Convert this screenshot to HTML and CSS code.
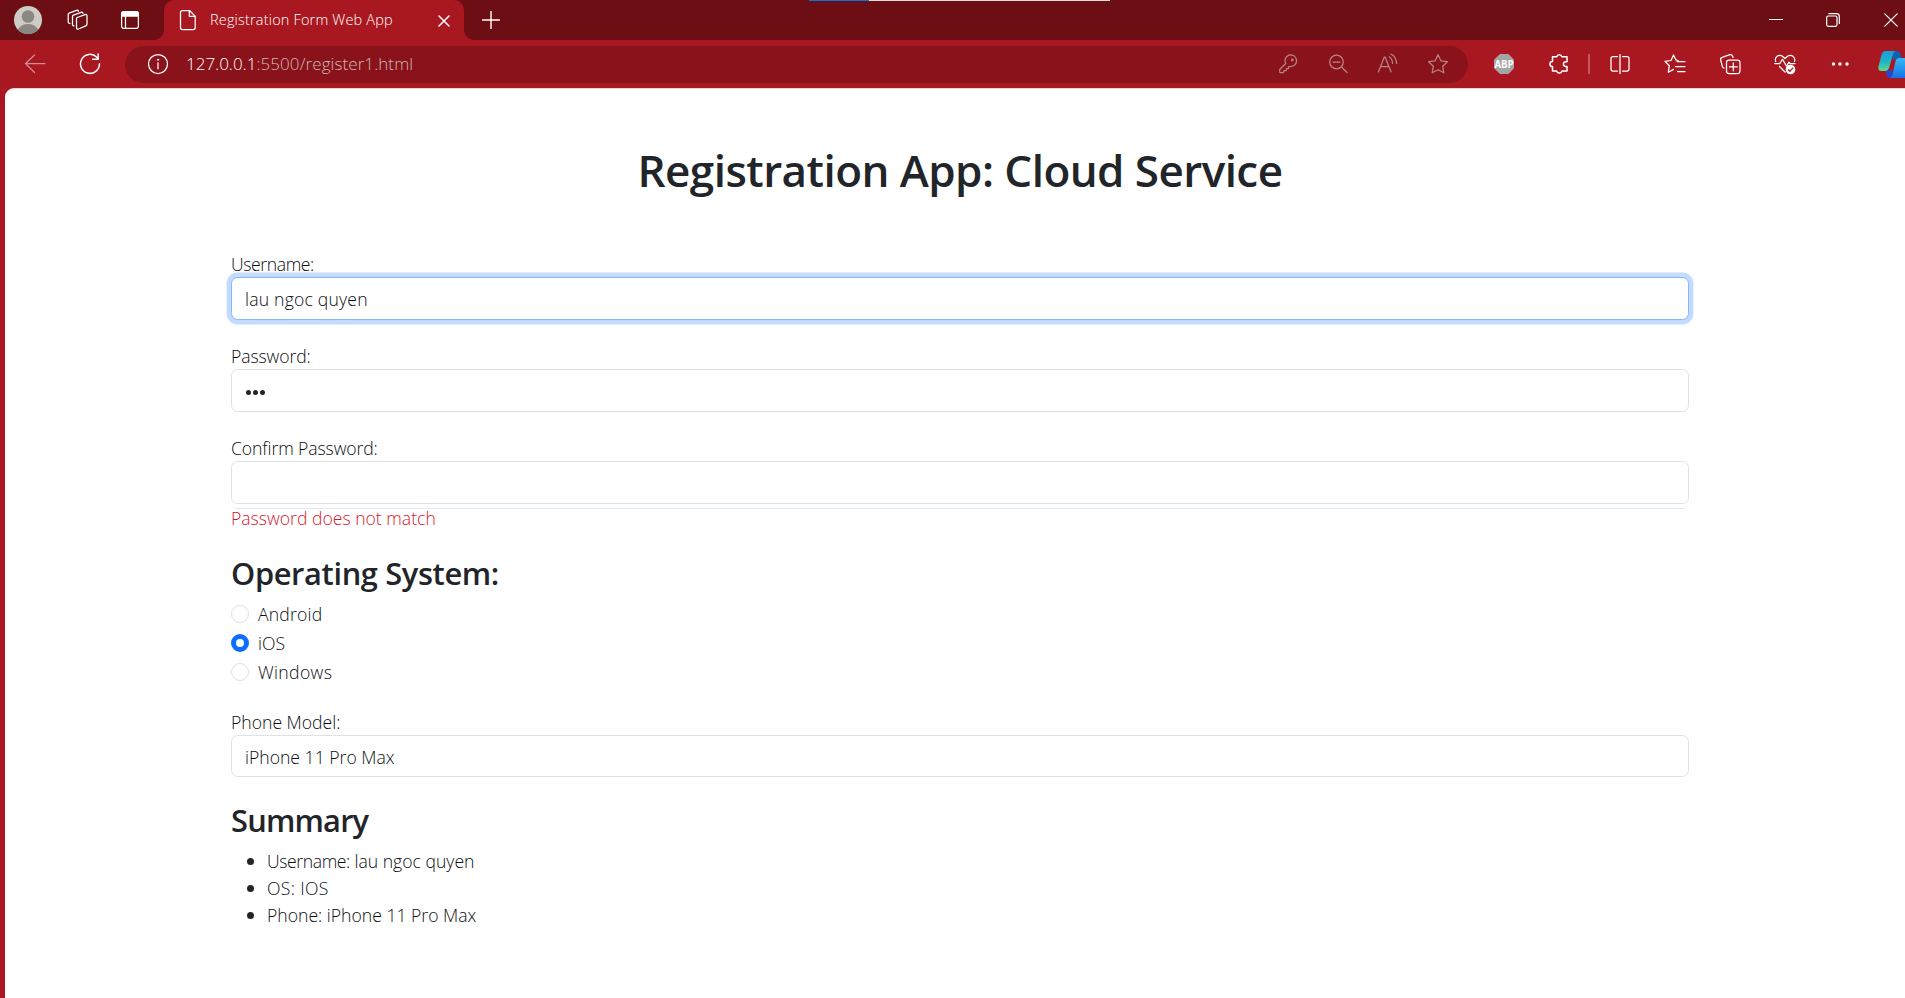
FILE: index.html
```html
<!DOCTYPE html>
<html lang="en">
<head>
<meta charset="utf-8">
<title>Registration Form Web App</title>
<link rel="stylesheet" href="styles.css">
</head>
<body>
<div class="loadbar"><span class="loadbar-done"></span></div>
<header class="strip">
  <svg class="avatar" viewBox="0 0 28 28"><defs><clipPath id="av"><circle cx="14" cy="14" r="14"/></clipPath></defs><circle cx="14" cy="14" r="14" fill="#cfccc8"/><g clip-path="url(#av)" fill="#8b8783"><circle cx="14" cy="10.5" r="6.3"/><ellipse cx="14" cy="26" rx="10.5" ry="8"/></g></svg>
  <svg class="ic workspaces" viewBox="0 0 24 24"><path d="M11.2 9.5 19 6.6q2-.6 2 1.3v8.2q0 1.300-1.200 1.800L12.500 21q-2 .7-2-1.300V10.500q0-.7.700-1z"/><path d="M8 17.800q-1.500.2-1.500-1.500V8.500q0-1 1-1.400L15 4.300q1.700-.5 2 1"/><path d="M4 15.300q-1.800.2-1.800-1.500V6.500q0-1 1-1.400L10.500 2.400q1.500-.5 2 .8"/></svg>
  <svg class="ic tabmenu" viewBox="0 0 24 24"><rect x="3.600" y="3.600" width="16.800" height="16.800" rx="2.500"/><path d="M3.600 8V6q0-2.400 2.400-2.400h12q2.400 0 2.400 2.400v2z" fill="#fff"/><path d="M7.500 8v12"/></svg>
  <div class="tab">
    <svg class="ic doc" viewBox="0 0 24 24"><path d="M6.500 2.500h7l5.700 5.700v11.300q0 2-2 2H6.500q-2 0-2-2v-15q0-2 2-2zM13.300 2.700v5.600h5.700"/></svg>
    <span class="tab-title">Registration Form Web App</span>
    <svg class="ic tab-x" viewBox="0 0 12 12"><path d="M1 1l10 10M11 1 1 11"/></svg>
  </div>
  <svg class="ic plus" viewBox="0 0 18 18"><path d="M9 .500v17M.500 9h17"/></svg>
  <svg class="ic wmin" viewBox="0 0 14 14"><path d="M.5 6.500h13"/></svg>
  <svg class="ic wmax" viewBox="0 0 14 14"><rect x=".7" y="3" width="10.300" height="10.300" rx="1.500"/><path d="M3 .7h7.500q2.800 0 2.800 2.800V10.500"/></svg>
  <svg class="ic wclose" viewBox="0 0 14 14"><path d="M.800.800l12.400 12.400M13.200.800.800 13.200"/></svg>
</header>
<nav class="toolbar">
  <svg class="ic back" viewBox="0 0 22 22"><path d="M21 10.500H1.500M10.500 2 1.500 10.500 10.500 19.500"/></svg>
  <svg class="ic reload" viewBox="0 0 22 22"><path d="M20.500 10.800A9.500 9.500 0 1 1 17.800 4.200L19 5.700M19.200 1v5.200h-5.500"/></svg>
  <div class="address">
    <svg class="ic info" viewBox="0 0 22 22"><circle cx="11" cy="11" r="9.500"/><path d="M11 9.800v6"/><circle cx="11" cy="6.800" r=".7" fill="#fff" stroke-width=".6"/></svg>
    <span class="host">127.0.0.1</span><span class="path">:5500/register1.html</span>
    <div class="address-tools">
      <svg class="ic" viewBox="0 0 24 24"><path d="M9.700 11.500A5.800 5.800 0 1 1 14.500 14.500q-1.300-.3-2 .5v1.500h-2l-.4 2.200H8l-.5 2H4.500q-.8 0-.8-.8v-2.400z"/><circle cx="16.300" cy="8" r=".8"/></svg>
      <svg class="ic" viewBox="0 0 24 24"><circle cx="10.500" cy="10" r="6.800"/><path d="M15.500 15l5.500 5.500M7 10h7"/></svg>
      <svg class="ic" viewBox="0 0 24 24"><path d="M2.500 19.800 8.300 5h.8L15 19.800M4.700 14.500h8M13.300 4.800q3 1.800 3.200 6.500M14.800 2q5.500 2.500 5.800 9.500"/></svg>
      <svg class="ic" viewBox="0 0 24 24"><path d="M12 2.800l2.900 6 6.500.9-4.700 4.600 1.100 6.500L12 17.700l-5.800 3.100 1.100-6.500L2.600 9.700l6.500-.9z"/></svg>
    </div>
  </div>
  <div class="actions">
    <svg class="abp" viewBox="0 0 24 24"><path d="M8 2h8.500L22 7.800v8.500L16.500 22H8L2 16.300V7.800z" fill="#a5a5a5"/><text x="12" y="15.800" text-anchor="middle" textLength="19" lengthAdjust="spacingAndGlyphs" class="abp-text">ABP</text></svg>
    <svg class="ic puzzle" viewBox="0 0 24 24"><path d="M6.500 4.800h3.200a2.700 2.700 0 0 1 5.200 0H20v4.900h-1.200a2.300 2.300 0 0 0 0 4.800H20v4.600h-5.100a2.700 2.700 0 0 1-5.200 0H5.500v-4.500a2.600 2.600 0 0 1 0-5.200V4.800z"/></svg>
    <span class="divider"></span>
    <svg class="ic split" viewBox="0 0 24 24"><path d="M12 2.500v19M9.500 4.500H5q-2 0-2 2v10.500q0 2 2 2h4.500M14.500 4.500H19q2 0 2 2v10.500q0 2-2 2h-4.500"/></svg>
    <svg class="ic fav" viewBox="0 0 24 24"><path d="M15 8.500 12.800 7.800 10.500 2.900 8 8.500 2 9.300l4.300 4.400-1 6.600 5.200-2.900M14 9.500h8M12.500 14.500h9.500M14.500 19.500h7.500"/></svg>
    <svg class="ic coll" viewBox="0 0 24 24"><rect x="8.500" y="8" width="13.500" height="13.500" rx="2.500"/><path d="M15.300 10.800v8M11.300 14.800h8M6 16.200q-1.300-.3-1.600-1.500L2.700 8Q2.200 5.800 4.200 5.300L11.800 2.700q2-.5 2.700 1.300l.6 1.500"/></svg>
    <svg class="ic health" viewBox="0 0 24 24"><path d="M2.700 9.500Q1.600 6.500 3.700 4.600 6.500 2.300 9.500 4.200L12 6.500l2.500-2.300q3-1.900 5.800.4 2.100 1.900 1.200 4.900M1.800 11.500h5L9.500 7.200l4 7 2.500-4 1 1.300h5M6.500 14.500l5.500 5.500"/><circle cx="17.500" cy="17.500" r="4.800" fill="#fff" stroke="none"/><path d="M15.300 17.800l1.500 1.500 3-3.200" stroke="#a91820"/></svg>
    <svg class="dots" viewBox="0 0 24 24" fill="#fff"><circle cx="5.500" cy="12" r="1.700"/><circle cx="12" cy="12" r="1.700"/><circle cx="19" cy="12" r="1.700"/></svg>
    <svg class="copilot" viewBox="0 0 27 27"><defs><linearGradient id="c1" x1="0" y1="0" x2="0" y2="1"><stop offset="0" stop-color="#169fe0"/><stop offset=".55" stop-color="#20b5c4"/><stop offset="1" stop-color="#63d98c"/></linearGradient><linearGradient id="c2" x1="0" y1="0" x2="0" y2="1"><stop offset="0" stop-color="#35b8f5"/><stop offset="1" stop-color="#1573e8"/></linearGradient></defs><path d="M15 0h4q2.500 0 3.500 3l1.500 5h-5l-4 1z" fill="#0b61b5"/><path d="M8 20l7-1-1 5.500Q13 27 11 27 9.500 26.500 8.500 24z" fill="#2145d4"/><path d="M7.500 0H18q-2 0-3 3.500L11 17q-1 3-4 3H3.500Q-.5 20 .5 15L3.500 4Q4.500 0 7.500 0z" fill="url(#c1)"/><path d="M20.500 7H27V27H11q2.500 0 3.500-3.500L17.500 10Q18.500 7 20.500 7z" fill="url(#c2)"/></svg>
  </div>
</nav>
<main class="page">
  <h1>Registration App: Cloud Service</h1>
  <form class="form">
    <div class="field"><label class="tight">Username:</label><div class="control focused loose">lau ngoc quyen</div></div>
    <div class="field"><label class="snug">Password:</label><div class="control"><i class="dot"></i><i class="dot"></i><i class="dot"></i></div></div>
    <div class="field confirm"><label class="snug">Confirm Password:</label><div class="control"></div><p class="error">Password does not match</p></div>
    <h3 class="os-title">Operating System:</h3>
    <div class="options">
      <label class="option"><span class="radio"></span><span class="loose">Android</span></label>
      <label class="option"><span class="radio checked"></span><span>iOS</span></label>
      <label class="option"><span class="radio"></span><span class="looser">Windows</span></label>
    </div>
    <div class="field phone"><label>Phone Model:</label><div class="control select">iPhone 11 Pro Max</div></div>
  </form>
  <h3 class="summary-title">Summary</h3>
  <ul class="summary">
    <li><span><span class="tight">Username:</span> lau ngoc quyen</span></li>
    <li><span class="looser">OS: IOS</span></li>
    <li><span>Phone: iPhone 11 Pro Max</span></li>
  </ul>
</main>
</body>
</html>
```
FILE: styles.css
```css
* { box-sizing: border-box; }
body {
  margin: 0;
  height: 998px;
  overflow: hidden;
  background: #a91820;
  color: #0b0e11;
  font: 300 17.6px/26px "Open Sans", "Noto Sans", sans-serif;
}
svg { display: block; flex: none; }
.ic {
  width: 24px;
  height: 24px;
  fill: none;
  stroke: #fff;
  stroke-width: 1.25;
  stroke-linecap: round;
  stroke-linejoin: round;
}

/* Window loading indicator */
.loadbar { position: absolute; top: 0; left: 809px; width: 301px; height: 1px; background: #ddd; }
.loadbar-done { display: block; width: 60px; height: 1px; background: #0078d4; }

/* Tab strip */
.strip { display: flex; align-items: center; height: 40px; background: #6d0e14; padding-left: 14px; }
.avatar { width: 28px; height: 28px; }
.workspaces { margin-left: 24px; }
.tabmenu { margin-left: 28px; }
.tab {
  position: relative;
  display: flex;
  align-items: center;
  width: 300px;
  height: 40px;
  margin-left: 22px;
  padding-left: 12px;
  background: #a91820;
  border-radius: 10px 10px 0 0;
}
.tab::before, .tab::after { content: ""; position: absolute; bottom: 0; width: 10px; height: 10px; }
.tab::before { left: -10px; background: radial-gradient(circle at 0 0, #6d0e14 9.500px, #a91820 10.200px); }
.tab::after { right: -10px; background: radial-gradient(circle at 100% 0, #6d0e14 9.500px, #a91820 10.200px); }
.tab-title { margin-left: 10px; width: 228px; color: #fff; font-size: 14.500px; letter-spacing: .17px; white-space: nowrap; }
.tab-x { width: 12px; height: 12px; stroke-width: 1.500; margin-top: 1px; }
.plus { width: 18px; height: 18px; margin-left: 18px; stroke-width: 1.400; }
.wmin, .wmax, .wclose { width: 14px; height: 14px; stroke-width: 1.200; }
.wmin { margin-left: 1269px; }
.wmax { margin-left: 43px; }
.wclose { margin-left: 44px; }

/* Toolbar */
.toolbar { display: flex; align-items: center; height: 48px; padding-left: 24px; }
.toolbar .back { width: 22px; height: 22px; opacity: .5; }
.reload { width: 22px; height: 22px; margin-left: 33px; stroke-width: 1.500; }
.address {
  display: flex;
  align-items: center;
  width: 1343px;
  height: 37px;
  margin-left: 24px;
  padding-left: 22px;
  border-radius: 19px;
  background: #8a121a;
  font-size: 17px;
  white-space: nowrap;
}
.address .info { width: 22px; height: 22px; }
.host { margin-left: 17px; color: #fff; }
.path { color: #cdb8b8; letter-spacing: .08px; }
.address-tools { display: flex; gap: 26px; margin: 0 18px 0 auto; }
.address-tools .ic { stroke: #b58487; }
.actions { display: flex; align-items: center; margin-left: 24px; }
.actions svg { width: 24px; height: 24px; }
.abp-text { font: 700 10px "Open Sans", sans-serif; fill: #fff; }
.actions .puzzle { margin-left: 31px; stroke-width: 1.500; }
.divider { width: 2px; height: 20px; margin-left: 17px; background: #c4585e; }
.actions .split { margin-left: 18px; }
.actions .fav { margin-left: 31px; }
.actions .coll, .actions .health, .actions .dots { margin-left: 31px; }
.actions .copilot { width: 27px; height: 27px; margin-left: 26px; }

/* Page */
.page { height: 910px; margin-left: 5px; padding: 55px 216px 0 226px; background: #fff; border-top: 1px solid #ead6d8; border-top-left-radius: 9px; }
h1, h3, p, ul { margin: 0; }
h1, h3 { color: #212529; font-weight: 600; }
h1 { font-size: 44px; line-height: 53px; letter-spacing: -.55px; text-align: center; }
h3 { font-size: 30.800px; line-height: 37px; letter-spacing: -.35px; }
.form { margin-top: 54px; }
.field { margin-bottom: 23px; }
.field label { display: block; }
.tight { letter-spacing: -.4px; }
.snug { letter-spacing: -.1px; }
.loose { letter-spacing: .2px; }
.looser { letter-spacing: .35px; }
.control {
  display: flex;
  align-items: center;
  height: 43px;
  padding: 1px 13px 0;
  border: 1px solid #dee2e6;
  border-radius: 6.500px;
  background: #fff;
}
.focused { border-color: #86b7fe; box-shadow: 0 0 0 4.400px #c2dbfe; }
.dot { width: 5px; height: 5px; margin: 2px 1px 0; border-radius: 50%; background: #212529; }
.confirm { position: relative; }
.confirm::after { content: ""; position: absolute; top: 73px; left: 4px; right: 4px; height: 1px; background: #dceafd; }
.error { margin-top: 1px; color: #d5192c; }
.os-title { margin-top: 24px; }
.options { display: grid; gap: 3px; margin: 9px 0 24px; }
.option { display: flex; align-items: center; gap: 9px; }
.radio { width: 18px; height: 18px; margin-top: -1px; border: 1px solid #dee2e6; border-radius: 50%; }
.checked { border: 5px solid #0d6efd; }
.select { height: 42px; padding-top: 2px; }
.phone { margin-bottom: 0; }
.summary-title { margin-top: 25px; letter-spacing: -.8px; }
.summary { margin-top: 9px; padding: 0; list-style: none; line-height: 27px; }
.summary li { display: flex; align-items: center; padding-left: 16px; }
.summary li::before { content: ""; width: 7px; height: 7px; margin-right: 13px; border-radius: 50%; background: #212529; }
```
